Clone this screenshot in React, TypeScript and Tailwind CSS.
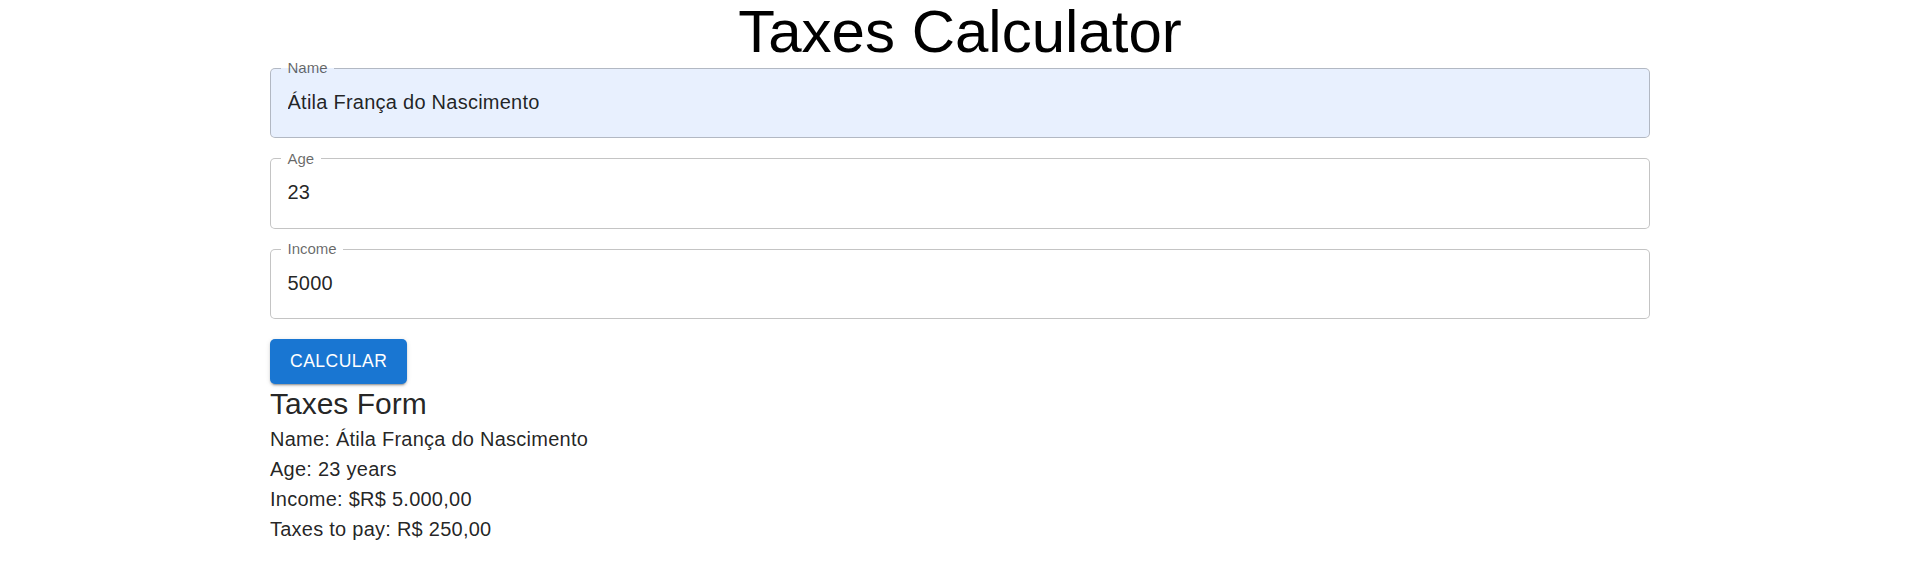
import React from "react";

const font = { fontFamily: '"Liberation Sans", Arial, Helvetica, sans-serif' };

function Field({ label, value, autofill }: { label: string; value: string; autofill?: boolean }) {
  return (
    <fieldset
      className={
        "w-full rounded-[5px] border border-[rgba(0,0,0,0.23)] " +
        (autofill ? "bg-[#e8f0fe]" : "bg-white")
      }
    >
      <legend className="ml-[10px] px-[6.5px] text-[15px] leading-[8px] h-[8px] text-[rgba(0,0,0,0.6)]">
        {label}
      </legend>
      <input
        className="block w-full h-[65px] pb-[5px] px-[16.5px] text-[20px] tracking-[0.25px] text-[rgba(0,0,0,0.87)] outline-none bg-transparent"
        style={font}
        defaultValue={value}
        readOnly
      />
    </fieldset>
  );
}

export default function App() {
  return (
    <div className="w-full min-h-[578px] bg-white flex justify-center pl-[2px]" style={font}>
      <div className="w-[1380px]">
        <h1 className="text-center text-[60px] leading-[64px] text-black font-normal">Taxes Calculator</h1>
        <div className="flex flex-col gap-[16.5px]">
          <Field label="Name" value="Átila França do Nascimento" autofill />
          <Field label="Age" value="23" />
          <Field label="Income" value="5000" />
        </div>
        <button
          className="mt-[20px] h-[45px] px-[20px] rounded-[5px] bg-[#1976d2] text-white text-[17.5px] tracking-[0.5px] uppercase shadow-[0px_3px_1px_-2px_rgba(0,0,0,0.2),0px_2px_2px_0px_rgba(0,0,0,0.14),0px_1px_5px_0px_rgba(0,0,0,0.12)]"
        >
          Calcular
        </button>
        <div className="text-[rgba(0,0,0,0.87)]">
          <h5 className="text-[30px] leading-[40px]">Taxes Form</h5>
          <p className="text-[20px] leading-[30px] tracking-[0.25px]">Name: Átila França do Nascimento</p>
          <p className="text-[20px] leading-[30px] tracking-[0.25px]">Age: 23 years</p>
          <p className="text-[20px] leading-[30px] tracking-[0.25px]">Income: $R$ 5.000,00</p>
          <p className="text-[20px] leading-[30px] tracking-[0.25px]">Taxes to pay: R$ 250,00</p>
        </div>
      </div>
    </div>
  );
}
